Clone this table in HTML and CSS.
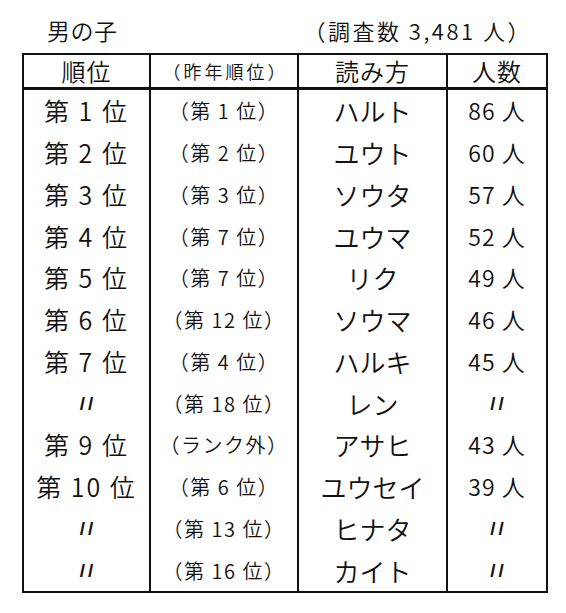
FILE: index.html
```html
<!DOCTYPE html>
<html lang="ja">
<head>
<meta charset="utf-8">
<link rel="stylesheet" href="styles.css">
</head>
<body>
<div class="page">
  <div class="caption">
    <span class="title">男の子</span>
    <span class="count">（調査数 3,481 人）</span>
  </div>
  <table class="rank">
    <colgroup>
      <col class="c1"><col class="c2"><col class="c3"><col class="c4">
    </colgroup>
    <thead>
      <tr><th>順位</th><th class="small">（昨年順位）</th><th>読み方</th><th>人数</th></tr>
    </thead>
    <tbody>
      <tr><td>第 1 位</td><td class="prev">（第 1 位）</td><td class="kana">ハルト</td><td class="num">86 人</td></tr>
      <tr><td>第 2 位</td><td class="prev">（第 2 位）</td><td class="kana">ユウト</td><td class="num">60 人</td></tr>
      <tr><td>第 3 位</td><td class="prev">（第 3 位）</td><td class="kana">ソウタ</td><td class="num">57 人</td></tr>
      <tr><td>第 4 位</td><td class="prev">（第 7 位）</td><td class="kana">ユウマ</td><td class="num">52 人</td></tr>
      <tr><td>第 5 位</td><td class="prev">（第 7 位）</td><td class="kana">リク</td><td class="num">49 人</td></tr>
      <tr><td>第 6 位</td><td class="prev">（第 12 位）</td><td class="kana">ソウマ</td><td class="num">46 人</td></tr>
      <tr><td>第 7 位</td><td class="prev">（第 4 位）</td><td class="kana">ハルキ</td><td class="num">45 人</td></tr>
      <tr><td class="ditto">//</td><td class="prev">（第 18 位）</td><td class="kana">レン</td><td class="ditto">//</td></tr>
      <tr><td>第 9 位</td><td class="prev">（ランク外）</td><td class="kana">アサヒ</td><td class="num">43 人</td></tr>
      <tr><td>第 10 位</td><td class="prev">（第 6 位）</td><td class="kana">ユウセイ</td><td class="num">39 人</td></tr>
      <tr><td class="ditto">//</td><td class="prev">（第 13 位）</td><td class="kana">ヒナタ</td><td class="ditto">//</td></tr>
      <tr><td class="ditto">//</td><td class="prev">（第 16 位）</td><td class="kana">カイト</td><td class="ditto">//</td></tr>
    </tbody>
  </table>
</div>
</body>
</html>
```
FILE: styles.css
```css
html, body {
  margin: 0;
  padding: 0;
  background: #fff;
}
body {
  font-family: "Noto Sans CJK JP", "Noto Sans", sans-serif;
  font-weight: 350;
  color: #111;
}
.page {
  padding: 15px 0 0 22px;
  width: 524px;
}
.caption {
  display: flex;
  justify-content: space-between;
  align-items: flex-start;
  height: 38px;
  font-size: 23px;
  line-height: 30px;
}
.title {
  padding-left: 25px;
  letter-spacing: 0.5px;
}
.count {
  font-size: 22px;
  margin-right: 14px;
  letter-spacing: 2.5px;
}
.rank {
  border-collapse: collapse;
  width: 524px;
  table-layout: fixed;
  border: 2px solid #111;
}
.c1 { width: 127px; }
.c2 { width: 148px; }
.c3 { width: 149px; }
.c4 { width: 100px; }
.rank th, .rank td {
  border-left: 2px solid #111;
  border-right: 2px solid #111;
  text-align: center;
  padding: 0;
  font-weight: 350;
  white-space: nowrap;
}
.rank th {
  height: 32px;
  font-size: 24px;
  line-height: 32px;
  border-bottom: 3px solid #111;
  letter-spacing: 1px;
}
.rank th.small {
  font-size: 18px;
  letter-spacing: 3px;
  padding-left: 3px;
}
.rank td {
  height: 41.75px;
  font-size: 25px;
  line-height: 41px;
  letter-spacing: 2px;
}
.rank td.prev {
  font-size: 20px;
  letter-spacing: 1.5px;
}
.rank td.kana {
  font-size: 26px;
  letter-spacing: 0;
}
.rank td.num {
  font-size: 23px;
  letter-spacing: 1px;
}
.rank td.ditto {
  font-family: "Liberation Sans", sans-serif;
  font-size: 19px;
  font-weight: 700;
  letter-spacing: 3px;
  padding-left: 3px;
}
```
